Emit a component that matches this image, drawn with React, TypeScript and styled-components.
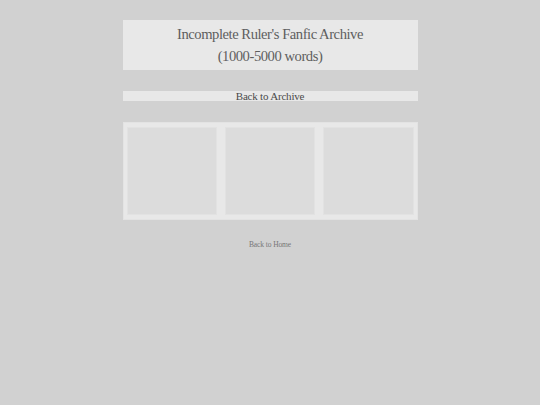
import React from 'react'
import styled, { createGlobalStyle } from 'styled-components'

const GlobalStyle = createGlobalStyle`
  html, body {
    margin: 0;
    padding: 0;
    background: #d1d1d1;
    font-family: "Liberation Serif", "Times New Roman", serif;
    color: #5e5e5e;
  }
`

const Page = styled.div`
  width: 295px;
  margin: 0 auto;
  padding-top: 20px;
  display: flex;
  flex-direction: column;
`

const Header = styled.header`
  background: #e8e8e8;
  height: 50px;
  display: flex;
  flex-direction: column;
  justify-content: center;
  align-items: center;
  font-size: 14.6px;
  letter-spacing: -0.45px;
  line-height: 22px;
`

const BackBar = styled.a`
  display: block;
  margin-top: 21px;
  height: 10px;
  background: #e8e8e8;
  text-align: center;
  font-size: 11px;
  letter-spacing: -0.2px;
  line-height: 10px;
  color: #4a4a4a;
  text-decoration: none;
`

const Gallery = styled.div`
  margin-top: 21px;
  background: #e8e8e8;
  border: 1px solid #e3e3e3;
  padding: 4px 3px;
  display: grid;
  grid-template-columns: repeat(3, 1fr);
  gap: 8px;
`

const Tile = styled.div`
  height: 86px;
  background: #dcdcdc;
  border: 1px solid #e2e2e2;
`

const HomeLink = styled.a`
  margin-top: 20px;
  text-align: center;
  font-size: 7.5px;
  letter-spacing: -0.1px;
  color: #777;
  text-decoration: none;
`

export default function App() {
  return (
    <>
      <GlobalStyle />
      <Page>
        <Header>
          <div>Incomplete Ruler's Fanfic Archive</div>
          <div>(1000-5000 words)</div>
        </Header>
        <BackBar href="#">Back to Archive</BackBar>
        <Gallery>
          <Tile />
          <Tile />
          <Tile />
        </Gallery>
        <HomeLink href="#">Back to Home</HomeLink>
      </Page>
    </>
  )
}
